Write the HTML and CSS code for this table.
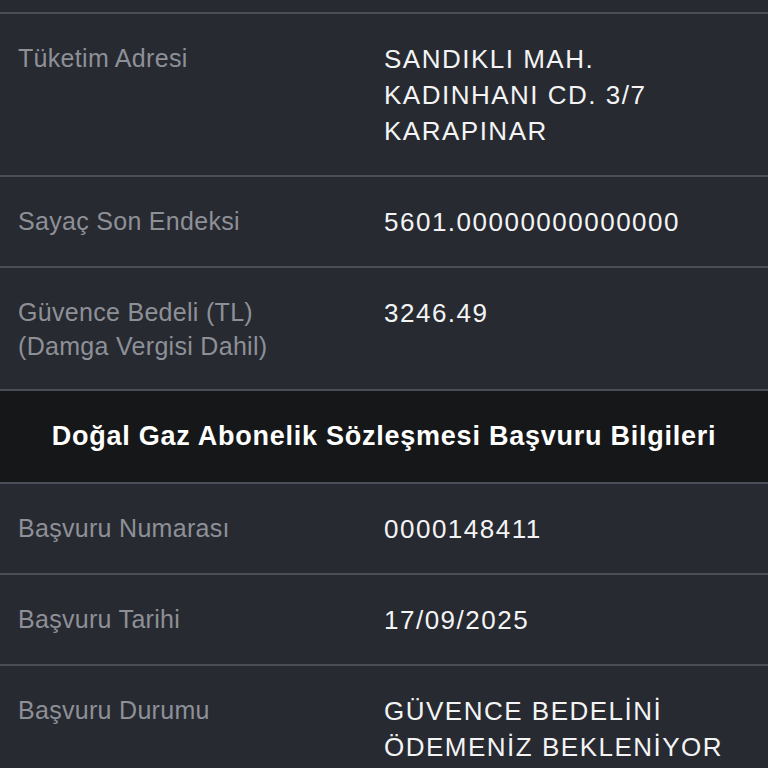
FILE: index.html
```html
<!DOCTYPE html>
<html lang="tr">
<head>
<meta charset="utf-8">
<title>Başvuru Bilgileri</title>
<link rel="stylesheet" href="styles.css">
</head>
<body>
<main class="screen">
  <section class="group group--first">
    <div class="row">
      <div class="label">Tüketim Adresi</div>
      <div class="value">SANDIKLI MAH.<br>KADINHANI CD. 3/7<br>KARAPINAR</div>
    </div>
    <div class="row">
      <div class="label">Sayaç Son Endeksi</div>
      <div class="value">5601.00000000000000</div>
    </div>
    <div class="row">
      <div class="label">Güvence Bedeli (TL)<br>(Damga Vergisi Dahil)</div>
      <div class="value">3246.49</div>
    </div>
  </section>
  <h2 class="section-title">Doğal Gaz Abonelik Sözleşmesi Başvuru Bilgileri</h2>
  <section class="group">
    <div class="row">
      <div class="label">Başvuru Numarası</div>
      <div class="value">0000148411</div>
    </div>
    <div class="row">
      <div class="label">Başvuru Tarihi</div>
      <div class="value">17/09/2025</div>
    </div>
    <div class="row">
      <div class="label">Başvuru Durumu</div>
      <div class="value">GÜVENCE BEDELİNİ<br>ÖDEMENİZ BEKLENİYOR</div>
    </div>
  </section>
</main>
</body>
</html>
```
FILE: styles.css
```css
html, body {
  margin: 0;
  padding: 0;
  background: #272a31;
}

.screen {
  width: 768px;
  height: 768px;
  overflow: hidden;
  background: #272a31;
  font-family: "Liberation Sans", Arial, sans-serif;
}

.group {
  border-top: 2px solid #4b4e56;
}

.group--first {
  margin-top: 12px;
}

.row {
  display: grid;
  grid-template-columns: 366px 1fr;
  padding: 27px 0 26px 18px;
  border-bottom: 2px solid #4b4e56;
}

.label {
  font-size: 25px;
  line-height: 34px;
  letter-spacing: 0.3px;
  color: #8e9097;
}

.value {
  font-size: 26px;
  line-height: 36px;
  letter-spacing: 1.5px;
  color: #f4f4f5;
}

.section-title {
  margin: 0;
  padding: 29px 0 30px;
  background: #161719;
  color: #ffffff;
  text-align: center;
  font-size: 27px;
  line-height: 32px;
  font-weight: 700;
  letter-spacing: 0.75px;
}
```
